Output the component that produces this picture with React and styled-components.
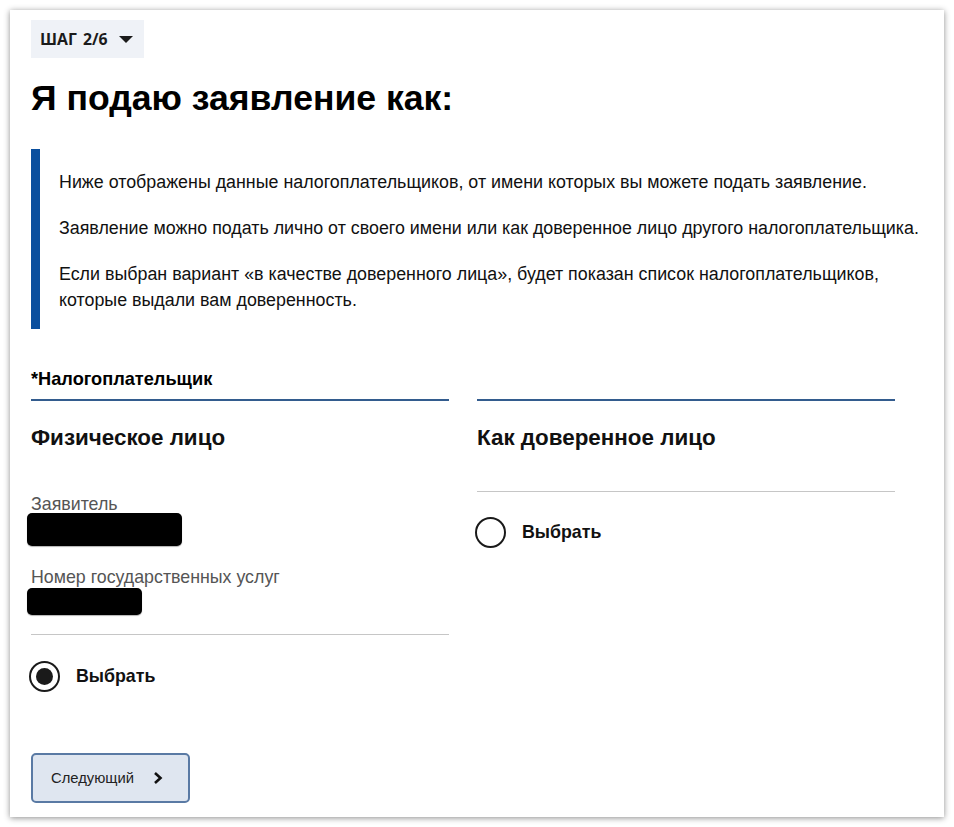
import React from "react";
import styled, { createGlobalStyle } from "styled-components";

const Global = createGlobalStyle`
  html, body {
    margin: 0;
    padding: 0;
    background: #ffffff;
  }
  body {
    font-family: "Liberation Sans", Arial, sans-serif;
    color: #111;
  }
`;

const Card = styled.div`
  box-sizing: border-box;
  margin: 10px;
  width: 934px;
  height: 807px;
  padding: 10px 21px;
  background: #fff;
  box-shadow: 0 1px 6px rgba(0, 0, 0, 0.45);
`;

const StepBadge = styled.div`
  display: inline-flex;
  align-items: center;
  gap: 11px;
  height: 38px;
  padding: 0 11px 0 9px;
  background: #eff2f7;
  font-family: "Open Sans", "Noto Sans", sans-serif;
  font-weight: 700;
  font-size: 15.8px;
  color: #1b1b1b;
  word-spacing: 2px;
`;

const Caret = styled.span`
  width: 0;
  height: 0;
  border-left: 7px solid transparent;
  border-right: 7px solid transparent;
  border-top: 7px solid #1b1b1b;
`;

const Title = styled.h1`
  margin: 20px 0 0;
  font-size: 35.6px;
  line-height: 41px;
  font-weight: 700;
  color: #000;
`;

const Notice = styled.div`
  margin-top: 30px;
  border-left: 9px solid #0a4f9e;
  padding: 20px 0 16px 19px;
`;

const NoticeText = styled.p`
  margin: 0;
  font-size: 17.85px;
  line-height: 26px;
  color: #111;
  & + & {
    margin-top: 20px;
  }
`;

const Columns = styled.div`
  display: grid;
  grid-template-columns: 418px 418px;
  column-gap: 28px;
  margin-top: 41px;
`;

const Column = styled.div`
  display: flex;
  flex-direction: column;
  align-items: flex-start;
`;

const ColumnHead = styled.div`
  align-self: stretch;
  height: 18px;
  padding-bottom: 11px;
  border-bottom: 2px solid #335c8e;
  font-size: 18.2px;
  line-height: 18px;
  font-weight: 700;
  color: #000;
`;

const Subtitle = styled.h2`
  margin: 25px 0 0;
  font-size: 22.4px;
  line-height: 23px;
  font-weight: 700;
  color: #111;
`;

const FieldLabel = styled.div`
  margin-top: ${(p) => p.$gap}px;
  font-size: 17.8px;
  line-height: 17px;
  color: #555;
`;

const Redacted = styled.div`
  margin-top: ${(p) => p.$gap || 0}px;
  margin-left: -4px;
  width: ${(p) => p.$w}px;
  height: ${(p) => p.$h}px;
  background: #000;
  border-radius: 5px;
  box-shadow: 0 1px 1px rgba(0, 0, 0, 0.3);
`;

const Divider = styled.div`
  align-self: stretch;
  margin-top: ${(p) => p.$gap}px;
  height: 1px;
  background: #c6c6c6;
`;

const RadioRow = styled.label`
  display: flex;
  align-items: center;
  gap: 16px;
  margin-top: ${(p) => p.$gap}px;
  margin-left: -2px;
  font-size: 17.8px;
  font-weight: 700;
  color: #111;
  cursor: pointer;
`;

const RadioCircle = styled.span`
  box-sizing: border-box;
  width: 31px;
  height: 31px;
  border-radius: 50%;
  border: 2px solid #1a1a1a;
  display: flex;
  align-items: center;
  justify-content: center;
  &::after {
    content: "";
    width: 17px;
    height: 17px;
    border-radius: 50%;
    background: #1a1a1a;
    display: ${(p) => (p.$checked ? "block" : "none")};
  }
`;

const NextButton = styled.button`
  box-sizing: border-box;
  margin-top: 61px;
  width: 159px;
  height: 50px;
  display: flex;
  align-items: center;
  gap: 19px;
  padding: 0 0 0 18px;
  background: #dfe6f0;
  border: 2px solid #5a7aa4;
  border-radius: 5px;
  font-family: "Liberation Sans", Arial, sans-serif;
  font-size: 14.8px;
  color: #222;
  cursor: pointer;
`;

const Chevron = () => (
  <svg width="10" height="14" viewBox="0 0 10 14">
    <polyline points="2,2 7.5,7 2,12" fill="none" stroke="#111" strokeWidth="2.6" />
  </svg>
);

function Radio({ checked, gap }) {
  return (
    <RadioRow $gap={gap}>
      <RadioCircle $checked={checked} />
      Выбрать
    </RadioRow>
  );
}

export default function App() {
  return (
    <>
      <Global />
      <Card>
        <StepBadge>
          ШАГ 2/6
          <Caret />
        </StepBadge>
        <Title>Я подаю заявление как:</Title>
        <Notice>
          <NoticeText>
            Ниже отображены данные налогоплательщиков, от имени которых вы можете подать заявление.
          </NoticeText>
          <NoticeText>
            Заявление можно подать лично от своего имени или как доверенное лицо другого налогоплательщика.
          </NoticeText>
          <NoticeText>
            Если выбран вариант «в качестве доверенного лица», будет показан список налогоплательщиков,
            <br />
            которые выдали вам доверенность.
          </NoticeText>
        </Notice>
        <Columns>
          <Column>
            <ColumnHead>*Налогоплательщик</ColumnHead>
            <Subtitle>Физическое лицо</Subtitle>
            <FieldLabel $gap={47}>Заявитель</FieldLabel>
            <Redacted $w={155} $h={33} />
            <FieldLabel $gap={23}>Номер государственных услуг</FieldLabel>
            <Redacted $gap={2} $w={115} $h={27} />
            <Divider $gap={19} />
            <Radio checked gap={26} />
          </Column>
          <Column>
            <ColumnHead />
            <Subtitle>Как доверенное лицо</Subtitle>
            <Divider $gap={42} />
            <Radio gap={25} />
          </Column>
        </Columns>
        <NextButton>
          Следующий
          <Chevron />
        </NextButton>
      </Card>
    </>
  );
}
